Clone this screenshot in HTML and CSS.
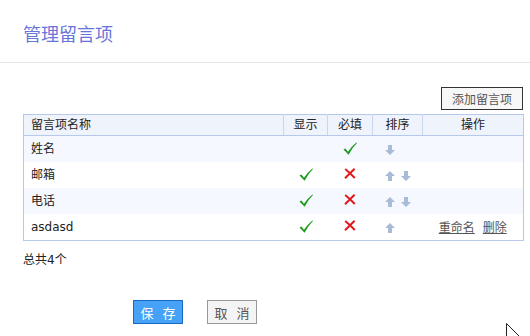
FILE: index.html
```html
<!DOCTYPE html>
<html lang="zh-CN">
<head>
    <meta charset="UTF-8">
    <title>管理留言项</title>
    <link rel="stylesheet" href="styles.css">
</head>
<body>

<div class="page-head">
    <h1>管理留言项</h1>
</div>

<div class="content">
    <div class="toolbar">
        <button class="btn-add">添加留言项</button>
    </div>

    <table class="field-table">
        <colgroup>
            <col class="w-name">
            <col class="w-show">
            <col class="w-req">
            <col class="w-sort">
            <col>
        </colgroup>
        <thead>
            <tr>
                <th class="col-name">留言项名称</th>
                <th>显示</th>
                <th>必填</th>
                <th>排序</th>
                <th>操作</th>
            </tr>
        </thead>
        <tbody>
            <tr>
                <td class="col-name">姓名</td>
                <td></td>
                <td><svg class="ico-ok" viewBox="0 0 14 13"><path d="M0.5 7.4 L2.4 6.4 L5 9.8 Q8.6 4.2 13.4 0.4 L14 1.1 Q9.2 5.8 5.6 12.8 Z"/></svg></td>
                <td class="col-sort"><svg class="ico-arrow" viewBox="0 0 10 10"><polygon points="3,0 7,0 7,5 10,5 5,10 0,5 3,5"/></svg></td>
                <td></td>
            </tr>
            <tr>
                <td class="col-name">邮箱</td>
                <td><svg class="ico-ok" viewBox="0 0 14 13"><path d="M0.5 7.4 L2.4 6.4 L5 9.8 Q8.6 4.2 13.4 0.4 L14 1.1 Q9.2 5.8 5.6 12.8 Z"/></svg></td>
                <td><svg class="ico-no" viewBox="0 0 12 11"><path d="M1.2 1 Q6 5 10.8 10 M10.6 0.8 Q6 5.4 1 10.2"/></svg></td>
                <td class="col-sort"><svg class="ico-arrow" viewBox="0 0 10 10"><polygon points="5,0 10,5 7,5 7,10 3,10 3,5 0,5"/></svg><svg class="ico-arrow" viewBox="0 0 10 10"><polygon points="3,0 7,0 7,5 10,5 5,10 0,5 3,5"/></svg></td>
                <td></td>
            </tr>
            <tr>
                <td class="col-name">电话</td>
                <td><svg class="ico-ok" viewBox="0 0 14 13"><path d="M0.5 7.4 L2.4 6.4 L5 9.8 Q8.6 4.2 13.4 0.4 L14 1.1 Q9.2 5.8 5.6 12.8 Z"/></svg></td>
                <td><svg class="ico-no" viewBox="0 0 12 11"><path d="M1.2 1 Q6 5 10.8 10 M10.6 0.8 Q6 5.4 1 10.2"/></svg></td>
                <td class="col-sort"><svg class="ico-arrow" viewBox="0 0 10 10"><polygon points="5,0 10,5 7,5 7,10 3,10 3,5 0,5"/></svg><svg class="ico-arrow" viewBox="0 0 10 10"><polygon points="3,0 7,0 7,5 10,5 5,10 0,5 3,5"/></svg></td>
                <td></td>
            </tr>
            <tr>
                <td class="col-name">asdasd</td>
                <td><svg class="ico-ok" viewBox="0 0 14 13"><path d="M0.5 7.4 L2.4 6.4 L5 9.8 Q8.6 4.2 13.4 0.4 L14 1.1 Q9.2 5.8 5.6 12.8 Z"/></svg></td>
                <td><svg class="ico-no" viewBox="0 0 12 11"><path d="M1.2 1 Q6 5 10.8 10 M10.6 0.8 Q6 5.4 1 10.2"/></svg></td>
                <td class="col-sort"><svg class="ico-arrow" viewBox="0 0 10 10"><polygon points="5,0 10,5 7,5 7,10 3,10 3,5 0,5"/></svg></td>
                <td class="col-op"><a href="#">重命名</a><a href="#">删除</a></td>
            </tr>
        </tbody>
    </table>

    <p class="total">总共4个</p>

    <div class="actions">
        <button class="btn-save">保 存</button>
        <button class="btn-cancel">取 消</button>
    </div>
</div>

<!-- mouse pointer captured in the screenshot -->
<svg class="cursor" viewBox="0 0 14 14"><path d="M0.5 0.5 L0.5 14 M0.5 0.5 L13.5 13.5"/></svg>

</body>
</html>
```

FILE: styles.css
```css
body {
    margin: 0;
    font-family: "DejaVu Sans", "Noto Sans CJK SC", sans-serif;
    font-size: 12px;
    color: #222;
    background-color: #fff;
    overflow: hidden;
}

.page-head {
    height: 62px;
    border-bottom: 1px solid #e6e6e6;
    padding-left: 23px;
    display: flex;
    align-items: center;
}

.page-head h1 {
    margin: 0;
    font-family: "Noto Sans CJK SC", sans-serif;
    font-size: 18px;
    font-weight: normal;
    color: #6775da;
    line-height: 24px;
    margin-top: 4px;
}

.content {
    padding: 0 6px 0 23px;
}

.toolbar {
    display: flex;
    justify-content: flex-end;
    padding-top: 24px;
    padding-right: 1px;
    margin-bottom: 4px;
}

.btn-add {
    height: 23px;
    width: 82px;
    padding: 0;
    border: 1px solid #333;
    background-color: #f7f7f7;
    color: #555;
    font-family: "Noto Sans CJK SC", sans-serif;
    font-size: 12px;
}

.field-table {
    width: 501px;
    border-collapse: collapse;
    border: 1px solid #b6c9ea;
    table-layout: fixed;
}

.w-name { width: 260px; }
.w-show { width: 44px; }
.w-req  { width: 45px; }
.w-sort { width: 50px; }

.field-table th {
    height: 20px;
    padding: 0;
    font-weight: normal;
    background-color: #eef3fc;
    border-bottom: 1px solid #b6c9ea;
    border-left: 1px solid #c9d7ef;
    line-height: 18px;
}

.field-table th.col-name {
    border-left: none;
}

.field-table td {
    height: 26px;
    padding: 0;
    text-align: center;
    line-height: 14px;
}

.field-table tbody tr:nth-child(odd) td {
    background-color: #f5f8fe;
}

.field-table .col-name {
    text-align: left;
    padding-left: 7px;
}

.field-table td.col-sort {
    text-align: left;
    padding-left: 12px;
}

.ico-ok {
    width: 14px;
    height: 13px;
    fill: #1c9a1c;
    vertical-align: -1px;
}

.ico-no {
    width: 12px;
    height: 11px;
    fill: none;
    stroke: #e2191c;
    stroke-width: 2;
    vertical-align: 0;
}

.ico-arrow {
    width: 10px;
    height: 10px;
    fill: #a8bbd7;
    margin-right: 6px;
    vertical-align: -2px;
}

.col-op a {
    color: #555;
    text-decoration: underline;
    margin: 0 4px;
    font-family: "Noto Sans CJK SC", sans-serif;
}

.total {
    margin: 12px 0 0;
    line-height: 14px;
}

.actions {
    display: flex;
    gap: 24px;
    padding-left: 110px;
    margin-top: 33px;
}

.actions button {
    width: 50px;
    height: 24px;
    padding: 0;
    font-family: "Noto Sans CJK SC", sans-serif;
    font-size: 13px;
    letter-spacing: 3px;
    text-indent: 3px;
}

.btn-save {
    background-color: #46a2f6;
    border: 1px solid #1a69c2;
    color: #fff;
}

.btn-cancel {
    background-color: #f4f4f4;
    border: 1px solid #999;
    color: #555;
}

.cursor {
    position: absolute;
    left: 506px;
    top: 323px;
    width: 14px;
    height: 14px;
    fill: none;
    stroke: #222;
    stroke-width: 1;
}
```
